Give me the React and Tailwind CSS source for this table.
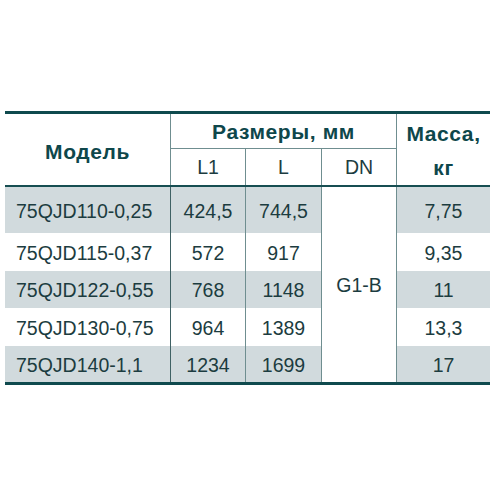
import React from "react";

const rows = [
  ["75QJD110-0,25", "424,5", "744,5", "7,75"],
  ["75QJD115-0,37", "572", "917", "9,35"],
  ["75QJD122-0,55", "768", "1148", "11"],
  ["75QJD130-0,75", "964", "1389", "13,3"],
  ["75QJD140-1,1", "1234", "1699", "17"],
];

const heights = ["h-[46px]", "h-[38px]", "h-[37px]", "h-[38px]", "h-[36px]"];

export default function App() {
  return (
    <div
      className="w-[496px] h-[496px] bg-white pt-[111px] pl-[5px]"
      style={{ fontFamily: '"Liberation Sans", Arial, sans-serif' }}
    >
      <div className="w-[485px] grid grid-cols-[165px_75px_76px_75px_94px] border-t-[3px] border-b-[3px] border-[#0f4a4e]">
        {/* header */}
        <div className="row-span-2 flex items-center justify-center text-[21px] font-bold text-[#0e474b] tracking-[0.6px] pt-[4px]">
          Модель
        </div>
        <div className="col-span-3 h-[35px] border-l border-b border-[#6f8e90] flex items-center justify-center text-[21px] font-bold text-[#0e474b] tracking-[0.6px] pt-[2px]">
          Размеры, мм
        </div>
        <div className="row-span-2 border-l border-[#6f8e90] flex flex-col items-center justify-center text-[21px] font-bold text-[#0e474b] leading-[34px] tracking-[0.6px] pt-[2px]">
          <span>Масса,</span>
          <span>кг</span>
        </div>
        <div className="h-[36px] border-l border-[#6f8e90] flex items-center justify-center text-[19.5px] text-[#1c3c40] pt-[1px]">L1</div>
        <div className="h-[36px] border-l border-[#6f8e90] flex items-center justify-center text-[19.5px] text-[#1c3c40] pt-[1px]">L</div>
        <div className="h-[36px] border-l border-[#6f8e90] flex items-center justify-center text-[19.5px] text-[#1c3c40] pt-[1px]">DN</div>
        <div className="col-span-5 h-[2px] bg-[#174e52]" />

        {/* body */}
        {rows.map((r, i) => {
          const bg = i % 2 === 0 ? "bg-[#d1dadd]" : "bg-white";
          const h = heights[i];
          return (
            <React.Fragment key={r[0]}>
              <div className={`${h} ${bg} flex items-center pl-[11px] text-[19.5px] text-[#1c3c40] pt-[3px]`}>
                {r[0]}
              </div>
              <div className={`${h} ${bg} border-l border-[#3f6164] flex items-center justify-center text-[19.5px] text-[#1c3c40] pt-[3px]`}>
                {r[1]}
              </div>
              <div className={`${h} ${bg} border-l border-[#6f8e90] flex items-center justify-center text-[19.5px] text-[#1c3c40] pt-[3px]`}>
                {r[2]}
              </div>
              {i === 0 && (
                <div className="row-span-5 bg-white border-l border-[#6f8e90] flex items-center justify-center text-[19.5px] text-[#1c3c40] pt-[3px]">
                  G1-B
                </div>
              )}
              <div className={`${h} ${bg} border-l border-[#6f8e90] flex items-center justify-center text-[19.5px] text-[#1c3c40] pt-[3px]`}>
                {r[3]}
              </div>
            </React.Fragment>
          );
        })}
      </div>
    </div>
  );
}
